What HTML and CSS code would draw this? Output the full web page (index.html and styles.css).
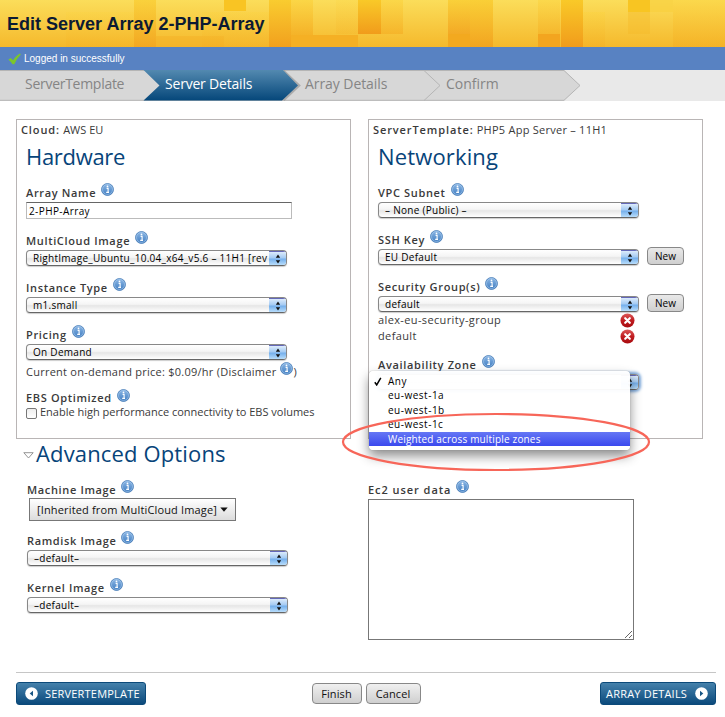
FILE: index.html
```html
<!DOCTYPE html>
<html lang="en">
<head>
<meta charset="utf-8">
<title>Edit Server Array 2-PHP-Array</title>
<link rel="stylesheet" href="styles.css">
</head>
<body>
<svg class="defs" width="0" height="0">
  <defs>
    <linearGradient id="gInfo" x1="0" y1="0" x2="0" y2="1"><stop offset="0" stop-color="#8db8e6"/><stop offset="1" stop-color="#3f7cc0"/></linearGradient>
    <linearGradient id="gRed" x1="0" y1="0" x2="0" y2="1"><stop offset="0" stop-color="#dc5a5a"/><stop offset=".5" stop-color="#c01c20"/><stop offset="1" stop-color="#a80c10"/></linearGradient>
    <linearGradient id="gOrange" x1="0" y1="0" x2="0" y2="1"><stop offset="0" stop-color="#f9c928"/><stop offset="1" stop-color="#f19c1b"/></linearGradient>
    <linearGradient id="gAmber" x1="0" y1="0" x2="0" y2="1"><stop offset="0" stop-color="#fbd33e"/><stop offset="1" stop-color="#f4ac22"/></linearGradient>
    <linearGradient id="gStep" x1="0" y1="0" x2="0" y2="1"><stop offset="0" stop-color="#5389b0"/><stop offset="1" stop-color="#05477a"/></linearGradient>
    <symbol id="info" viewBox="0 0 13 13"><circle cx="6.5" cy="6.5" r="6" fill="url(#gInfo)" stroke="#4a7db8" stroke-width=".8"/><circle cx="6.5" cy="6.5" r="5" fill="none" stroke="#a9cbed" stroke-width=".6"/><path d="M5.6 5.4h1.5v3.900M5.200 9.400h2.800" fill="none" stroke="#fff" stroke-width="1.100"/><circle cx="6.500" cy="3.400" r=".9" fill="#fff"/></symbol>
    <symbol id="del" viewBox="0 0 15 15"><circle cx="7.5" cy="7.5" r="7" fill="url(#gRed)"/><path d="M5.200 5.200l4.600 4.600M9.800 5.200l-4.600 4.600" stroke="#fff" stroke-width="2.200" stroke-linecap="round"/></symbol>
    <symbol id="updown" viewBox="0 0 6 10"><path d="M.8 3.800L3 .6l2.200 3.200zM.8 6.200L3 9.400l2.200-3.200z" fill="#111"/></symbol>
  </defs>
</svg>
<header class="banner">
  <svg class="mosaic" width="725" height="47">
    <rect x="66" y="12" width="68" height="35" fill="url(#gAmber)" opacity=".25"/>
    <rect x="134" width="22" height="47" fill="url(#gOrange)" opacity=".6"/>
    <rect x="156" y="36" width="68" height="11" fill="#f4ad24" opacity=".4"/>
    <rect x="224" width="22" height="11" fill="#f9c423"/>
    <rect x="202" y="12" width="67" height="35" fill="url(#gAmber)" opacity=".3"/>
    <rect x="269" width="22" height="47" fill="url(#gOrange)" opacity=".85"/>
    <rect x="291" width="22" height="35" fill="url(#gAmber)" opacity=".7"/>
    <rect x="291" y="35" width="67" height="12" fill="#f5b024"/>
    <rect x="336" y="0" width="22" height="34" fill="url(#gAmber)" opacity=".2"/>
    <rect x="358" width="23" height="34" fill="url(#gOrange)"/>
    <rect x="381" width="22" height="34" fill="url(#gAmber)" opacity=".6"/>
    <rect x="448" width="22" height="34" fill="url(#gOrange)" opacity=".65"/>
    <rect x="448" y="34" width="22" height="13" fill="#f3a91f"/>
    <rect x="470" width="23" height="47" fill="url(#gOrange)" opacity=".7"/>
    <rect x="538" width="22" height="34" fill="url(#gAmber)" opacity=".5"/>
    <rect x="538" y="34" width="22" height="13" fill="#f3a51f"/>
    <rect x="561" width="22" height="47" fill="url(#gOrange)"/>
    <rect x="583" y="12" width="22" height="35" fill="url(#gAmber)" opacity=".4"/>
    <rect x="628" width="22" height="12" fill="#f8c522"/>
    <rect x="628" y="12" width="22" height="22" fill="#f5b928" opacity=".4"/>
    <rect x="650" width="23" height="12" fill="#f9cf3c" opacity=".6"/>
    <rect x="673" width="52" height="47" fill="url(#gAmber)" opacity=".5"/>
  </svg>
  <h1>Edit Server Array 2-PHP-Array</h1>
</header>
<div class="flash">
  <svg width="13" height="12" viewBox="0 0 13 12"><path d="M.4 6.800L2.600 4.900l2.600 2.300Q7.800 2.300 12 .4l.8 1Q9 5 6.300 11.300H4.500Q3 8.500.4 6.800z" fill="#7cc62a"/></svg>
  <span>Logged in successfully</span>
</div>
<nav class="steps">
  <svg class="chevrons" width="725" height="31">
    <path d="M0 0H564L580 15.500 564 30.500H0z" fill="#d7d7d7"/>
    <path d="M0 .5H564L580 15.500 564 30.300H0M424 .5l16 15-16 15" fill="none" stroke="#b5b5b5"/>
    <path d="M283.500 1l15.500 14.500-15.500 14.500" fill="none" stroke="#8e8e8e" stroke-width="2.500" opacity=".6"/>
    <path d="M143.500 0H283L298 15.500 282 30.500H143.500L159.500 15.500z" fill="url(#gStep)"/>
  </svg>
  <span>ServerTemplate</span><span class="on">Server Details</span><span class="third">Array Details</span><span class="last">Confirm</span>
</nav>
<main>
  <div class="panels">
    <section class="panel">
      <p class="meta"><b>Cloud:</b> <span class="aws">AWS EU</span></p>
      <h2 class="hw">Hardware</h2>
      <div class="field first"><label>Array Name<svg class="i"><use href="#info"/></svg></label><div class="input">2-PHP-Array</div></div>
      <div class="field"><label>MultiCloud Image<svg class="i"><use href="#info"/></svg></label><div class="select"><span>RightImage_Ubuntu_10.04_x64_v5.6 – 11H1 [rev</span><i><svg><use href="#updown"/></svg></i></div></div>
      <div class="field"><label>Instance Type<svg class="i"><use href="#info"/></svg></label><div class="select"><span>m1.small</span><i><svg><use href="#updown"/></svg></i></div></div>
      <div class="field price"><label>Pricing<svg class="i"><use href="#info"/></svg></label><div class="select"><span>On Demand</span><i><svg><use href="#updown"/></svg></i></div></div>
      <p class="note">Current on-demand price: $0.09/hr (Disclaimer <svg class="i"><use href="#info"/></svg>)</p>
      <div class="ebs"><label>EBS Optimized<svg class="i"><use href="#info"/></svg></label>
      <p class="check"><span class="box"></span>Enable high performance connectivity to EBS volumes</p></div>
    </section>
    <section class="panel net">
      <p class="meta"><b>ServerTemplate:</b> <span>PHP5 App Server – 11H1</span></p>
      <h2>Networking</h2>
      <div class="field"><label>VPC Subnet<svg class="i"><use href="#info"/></svg></label><div class="select"><span>– None (Public) –</span><i><svg><use href="#updown"/></svg></i></div></div>
      <div class="field"><label>SSH Key<svg class="i"><use href="#info"/></svg></label><div class="row"><div class="select"><span>EU Default</span><i><svg><use href="#updown"/></svg></i></div><button class="new">New</button></div></div>
      <div class="field sec"><label>Security Group(s)<svg class="i"><use href="#info"/></svg></label><div class="row"><div class="select"><span>default</span><i><svg><use href="#updown"/></svg></i></div><button class="new">New</button></div></div>
      <p class="group"><span>alex-eu-security-group</span><svg><use href="#del"/></svg></p>
      <p class="group"><span>default</span><svg><use href="#del"/></svg></p>
      <div class="field zone"><label>Availability Zone<svg class="i"><use href="#info"/></svg></label><div class="select focus"><span></span><i><svg><use href="#updown"/></svg></i></div>
        <ul class="menu"><li><svg class="tick" width="8" height="9" viewBox="0 0 8 9"><path d="M.8 5.200L2.700 7.900 6.800.8" fill="none" stroke="#000" stroke-width="1.500"/></svg>Any</li><li>eu-west-1a</li><li>eu-west-1b</li><li>eu-west-1c</li><li class="hot">Weighted across multiple zones</li></ul>
      </div>
      <svg class="ring" width="316" height="66"><ellipse cx="158" cy="32" rx="153" ry="28" fill="none" stroke="#f76659" stroke-width="2.200"/></svg>
    </section>
  </div>
  <div class="advhead"><svg width="11" height="7"><path d="M.8.700h9.400L5.500 6z" fill="#fff" stroke="#8a8a8a" stroke-width=".9"/></svg><h2>Advanced Options</h2></div>
  <div class="adv">
    <div class="col">
      <div class="field"><label>Machine Image<svg class="i"><use href="#info"/></svg></label><button class="drop">[Inherited from MultiCloud Image]<svg width="8" height="5"><path d="M.3.500h7.400L4 4.700z" fill="#111"/></svg></button></div>
      <div class="field"><label>Ramdisk Image<svg class="i"><use href="#info"/></svg></label><div class="select"><span>–default–</span><i><svg><use href="#updown"/></svg></i></div></div>
      <div class="field"><label>Kernel Image<svg class="i"><use href="#info"/></svg></label><div class="select"><span>–default–</span><i><svg><use href="#updown"/></svg></i></div></div>
    </div>
    <div class="col2"><label>Ec2 user data<svg class="i"><use href="#info"/></svg></label><textarea></textarea></div>
  </div>
  <footer>
    <button class="blue"><svg width="13" height="13"><circle cx="6.500" cy="6.500" r="6.300" fill="#fff"/><path d="M8 3.800v5.400L4.700 6.500z" fill="#175584"/></svg><span>SERVERTEMPLATE</span></button>
    <div class="mid"><button class="gray fin">Finish</button><button class="gray can">Cancel</button></div>
    <button class="blue next"><span>ARRAY DETAILS</span><svg width="13" height="13"><circle cx="6.500" cy="6.500" r="6.300" fill="#fff"/><path d="M5 3.800v5.400l3.300-2.700z" fill="#175584"/></svg></button>
  </footer>
</main>
</body>
</html>
```
FILE: styles.css
```css
* { box-sizing: border-box; }
body { margin: 0; width: 725px; height: 717px; overflow: hidden; background: #fff; color: #3a3a3a; font: 11px/14px "Open Sans", "Noto Sans", sans-serif; }
h1, h2, p, ul { margin: 0; padding: 0; }
button { font-family: inherit; margin: 0; padding: 0; white-space: nowrap; }
.defs { position: absolute; }
.banner { height: 47px; position: relative; background: linear-gradient(#fbdd5a, #f5b92c); padding: 13px 0 0 7px; }
.mosaic { position: absolute; left: 0; top: 0; }
h1 { position: relative; font: bold 18px/23px "Liberation Sans", sans-serif; color: #0c1a33; letter-spacing: 0; white-space: nowrap; }
.flash { height: 23px; background: #5882c2; color: #fff; display: flex; align-items: center; padding-left: 8px; gap: 3px; font: 10px/22px "Liberation Sans", sans-serif; letter-spacing: 0; }
.steps { height: 31px; position: relative; background: #e9e9e9; display: flex; padding-left: 25px; font-size: 14px; line-height: 28px; color: #858585; letter-spacing: -.28px; }
.steps span { position: relative; width: 140px; white-space: nowrap; }
.steps .on { color: #fff; letter-spacing: -.2px; }
.steps .third { letter-spacing: -.07px; }
.steps .last { letter-spacing: 0; left: 1px; }
.chevrons { position: absolute; left: 0; top: 0; }
main { padding: 18px 9px 0 16px; }
.panels { display: flex; gap: 17px; height: 320px; }
.panel { width: 335px; height: 320px; border: 1px solid #b9b5b5; position: relative; padding-left: 9px; }
.meta { margin-left: -5px; height: 20px; line-height: 19px; white-space: nowrap; letter-spacing: .25px; }
.meta b { font-weight: 600; letter-spacing: .9px; }
.meta .aws { letter-spacing: 0; }
h2 { font-weight: 400; font-size: 22px; line-height: 32px; height: 34px; color: #07447a; letter-spacing: .15px; white-space: nowrap; }
.hw { letter-spacing: -.3px; }
.panel h2 { margin-bottom: 8px; }
label { display: flex; height: 20px; line-height: 22px; font-weight: 600; letter-spacing: .65px; white-space: nowrap; }
.i { width: 13px; height: 13px; margin-left: 5px; margin-top: .5px; flex: none; }
.field { height: 47px; }
.first { height: 48px; }
.price { height: 37px; }
.input { width: 266px; height: 17px; border: 1px solid #bbb; border-top-color: #666; color: #000; font-size: 10px; line-height: 16px; padding-left: 2px; letter-spacing: .4px; }
.select { width: 261px; height: 16px; border: 1px solid #888; border-bottom-color: #666; border-radius: 4px; display: flex; background: linear-gradient(#fff, #f5f5f5 45%, #e6e6e6 55%, #fff); color: #000; overflow: hidden; box-shadow: 0 1px 1px #ccc; }
.select span { flex: 1; min-width: 0; overflow: hidden; white-space: nowrap; padding-left: 6px; font-size: 10px; line-height: 14px; letter-spacing: .28px; }
.select i { width: 17px; flex: none; background: linear-gradient(#dcebfb, #a5cbf3 45%, #76b0ec 55%, #b8ddfb); border-top: 1px solid #6468b8; display: flex; justify-content: center; align-items: center; }
.select i svg { width: 6px; height: 10px; }
.note { height: 23px; line-height: 21px; letter-spacing: .25px; white-space: nowrap; display: flex; }
.note .i { margin-left: 4px; margin-top: 1px; }
.ebs label { height: 15px; line-height: 15px; margin-top: 6px; }
.ebs .i { margin-top: -1px; }
.check { display: flex; align-items: center; height: 14px; letter-spacing: -.01px; white-space: nowrap; }
.box { width: 11px; height: 11px; border: 1px solid #777; border-radius: 2px; margin-right: 3px; margin-top: 2px; background: linear-gradient(#eee, #fff); }
.row { display: flex; gap: 8px; height: 17px; align-items: flex-start; }
.new { width: 37px; height: 18px; margin-top: -2px; border: 1px solid #888; border-radius: 4px; background: linear-gradient(#e9e9e9, #cfcfcf); font-size: 10px; line-height: 16px; color: #000; letter-spacing: 0; }
.sec { height: 37px; }
.group { display: flex; justify-content: space-between; width: 257px; height: 16px; line-height: 14px; letter-spacing: .37px; }
.group svg { width: 15px; height: 15px; }
.zone { margin-top: 9px; position: relative; }
.focus { box-shadow: 0 0 3px 2px #7ba7da; }
.menu { position: absolute; left: -9px; top: 17px; width: 261px; height: 79px; padding-top: 3px; background: rgba(255,255,255,.96); border-radius: 4px; list-style: none; box-shadow: 0 0 1px #777, 0 6px 12px rgba(0,0,0,.45); color: #000; font-size: 10px; line-height: 14px; letter-spacing: .5px; z-index: 2; }
.menu li { padding-left: 19px; height: 14.4px; position: relative; }
.menu .hot { background: linear-gradient(#6577f5, #3b49ee); color: #fff; letter-spacing: .17px; }
.tick { position: absolute; left: 5px; top: 3px; }
.ring { position: absolute; left: -31px; top: 290px; z-index: 3; }
.advhead { display: flex; align-items: center; height: 34px; padding-left: 7px; gap: 2px; margin-top: -2px; }
.advhead svg { margin-top: 2px; }
.adv { display: flex; height: 193px; margin-top: 8px; padding-left: 11px; }
.col { width: 341px; }
.drop { display: flex; align-items: center; justify-content: center; gap: 3px; margin-left: 2px; margin-top: -1px; width: 207px; height: 23px; border: 1px solid #777; background: linear-gradient(#fff, #dcdcdc); color: #111; font-size: 11px; letter-spacing: .15px; }
.adv .i { margin-top: 1px; }
.adv .field:first-child { height: 51px; }
.col2 label { letter-spacing: .95px; }
textarea { display: block; width: 266px; height: 141px; border: 1px solid #777; margin: 0; }
footer { border-top: 1px solid #c6c6c6; display: flex; align-items: flex-start; justify-content: space-between; padding-top: 9px; width: 700px; }
.blue { width: 130px; height: 23px; border: 1px solid #0c4a7a; border-radius: 3px; background: linear-gradient(#4581ab, #0b4a7c); color: #fff; font-size: 11px; letter-spacing: .2px; line-height: 20px; display: flex; align-items: center; padding-left: 8px; gap: 7px; }
.next { width: 116px; padding-left: 5px; gap: 8px; }
.mid { display: flex; gap: 4px; padding-top: 1px; margin-left: -14px; }
.gray { height: 21px; border: 1px solid #888; border-radius: 4px; background: linear-gradient(#f0f0f0, #cfcfcf); font-size: 11px; line-height: 17px; color: #111; letter-spacing: .1px; }
.fin { width: 50px; }
.can { width: 55px; }
```
